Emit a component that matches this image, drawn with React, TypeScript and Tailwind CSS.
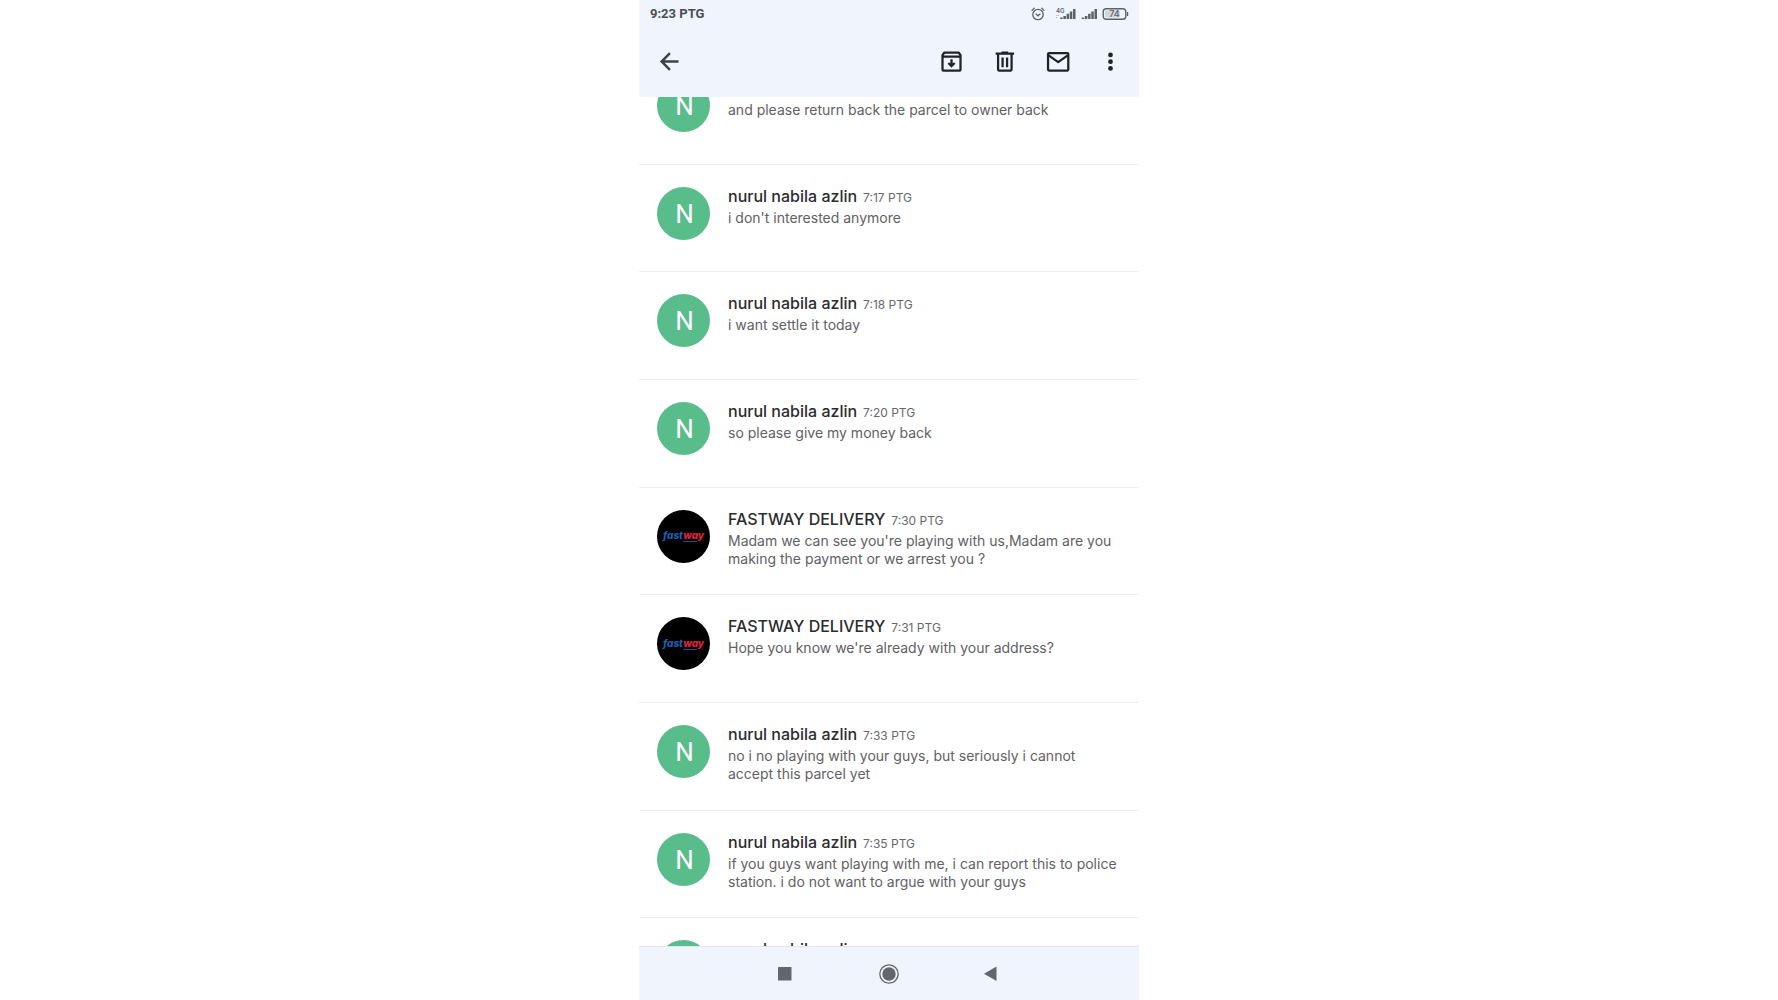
import React from 'react';

interface Message {
  id: number;
  sender: 'nurul nabila azlin' | 'FASTWAY DELIVERY';
  time: string;
  text: string;
}

const MESSAGES: Message[] = [
  { id: 1, sender: 'nurul nabila azlin', time: '7:17 PTG', text: 'and please return back the parcel to owner back' },
  { id: 2, sender: 'nurul nabila azlin', time: '7:17 PTG', text: "i don't interested anymore" },
  { id: 3, sender: 'nurul nabila azlin', time: '7:18 PTG', text: 'i want settle it today' },
  { id: 4, sender: 'nurul nabila azlin', time: '7:20 PTG', text: 'so please give my money back' },
  { id: 5, sender: 'FASTWAY DELIVERY', time: '7:30 PTG', text: "Madam we can see you're playing with us,Madam are you making the payment or we arrest you ?" },
  { id: 6, sender: 'FASTWAY DELIVERY', time: '7:31 PTG', text: "Hope you know we're already with your address?" },
  { id: 7, sender: 'nurul nabila azlin', time: '7:33 PTG', text: 'no i no playing with your guys, but seriously i cannot accept this parcel yet' },
  { id: 8, sender: 'nurul nabila azlin', time: '7:35 PTG', text: 'if you guys want playing with me, i can report this to police station. i do not want to argue with your guys' },
  { id: 9, sender: 'nurul nabila azlin', time: '7:21 PTG', text: '' },
];

export default function App() {
  return (
    <div className="h-screen bg-white font-['Inter','Liberation_Sans',sans-serif]">
      <div className="mx-auto flex h-full w-full max-w-[500px] flex-col">
        <header className="bg-[#f0f4fc]">
          <StatusBar />
          <Toolbar />
        </header>

        <main className="min-h-0 flex-1 overflow-hidden">
          {/* list is scrolled part way through the first message */}
          <ul className="-mt-10 grid h-[969px] auto-rows-fr">
            {MESSAGES.map((m) => (
              <MessageRow key={m.id} message={m} />
            ))}
          </ul>
        </main>

        <NavBar />
      </div>
    </div>
  );
}

function StatusBar() {
  return (
    <div className="flex h-[27px] items-center justify-between pr-[10px] pl-[11px]">
      <span className="font-['Roboto',sans-serif] text-[13px] font-bold text-[#4a4d55]">9:23 PTG</span>
      <div className="flex items-center text-[#5c6068]">
        <svg className="mr-[10px] size-[14px]" viewBox="0 0 14 14" fill="none" stroke="currentColor" strokeWidth="1.3" strokeLinecap="round">
          <circle cx="7" cy="7.5" r="5.2" />
          <path d="M1 3.4 3.2 1.2M13 3.4 10.8 1.2M5 7.1 7 8.8 9 7.100" />
        </svg>
        <svg className="mr-[5px] h-[14px] w-[21px]" viewBox="0 0 21 14" fill="currentColor">
          <text x="1" y="5.5" fontSize="6" fontWeight="600">4G</text>
          <path d="M1 8h1.5v1H1zM3 8h1v1H3zM1 10h1.5v1H1z" opacity=".4" />
          <path d="M5.2 10.500h2.500V12H5.200zM8.400 9h2.500v3H8.400zM11.600 6.700h2.500V12h-2.500zM14.800 4.500h2.500V12h-2.500zM18 2h2.500v10H18z" />
        </svg>
        <svg className="mr-1 h-[14px] w-[17px]" viewBox="0 0 17 14" fill="currentColor">
          <path d="M.7 10.500h2.500V12H.7zM3.900 9h2.500v3H3.900zM7.100 6.700h2.500V12H7.100zM10.300 4.500h2.500V12h-2.500zM13.500 2H16v10h-2.500z" />
        </svg>
        <svg className="h-[14px] w-[27px]" viewBox="0 0 27 14">
          <rect x="1.2" y="1.7" width="22.6" height="10.6" rx="3" fill="none" stroke="currentColor" strokeWidth="1.4" />
          <rect x="3" y="3.5" width="15" height="7" rx="1" fill="currentColor" opacity=".2" />
          <path d="M25 5h1.2v4H25z" fill="currentColor" />
          <text x="12.5" y="10.2" fontSize="9" fontWeight="500" textAnchor="middle" fill="currentColor">74</text>
        </svg>
      </div>
    </div>
  );
}

function Toolbar() {
  return (
    <div className="flex h-[70px] items-center justify-between pr-[15px] pb-0.5 pl-[17px] text-[#1f2228]">
      <button aria-label="Back" className="size-[27px] text-[#3f4248]">
        <svg viewBox="0 0 24 24" fill="none" stroke="currentColor" strokeWidth="2.2">
          <path d="M20 12H5.2M12.4 4.6 5 12l7.4 7.4" />
        </svg>
      </button>
      <div className="flex gap-[26px]">
        <button aria-label="Archive" className="size-[27px]">
          <svg viewBox="0 0 24 24" fill="none" stroke="currentColor" strokeWidth="2" strokeLinejoin="round">
            <path d="M4 7v12.300c0 .5.3.8.8.8h14.400c.5 0 .8-.3.8-.8V6.400L18.300 4H5.700L4 6.400V7.600h16" />
            <path d="M12 10v6M9.200 13.400 12 16.200l2.800-2.800" strokeLinejoin="miter" />
          </svg>
        </button>
        <button aria-label="Delete" className="size-[27px]">
          <svg viewBox="0 0 24 24" fill="none" stroke="currentColor" strokeWidth="2">
            <path d="M4.100 5h16.400M9.300 4h6M6.300 5v14.200c0 .5.3.8.8.8h10.400c.5 0 .8-.3.8-.8V5M10.300 8.500v8.500M14.300 8.500v8.500" />
          </svg>
        </button>
        <button aria-label="Mark as unread" className="size-[27px]">
          <svg viewBox="0 0 24 24" fill="none" stroke="currentColor" strokeWidth="2" strokeLinejoin="round">
            <rect x="3.600" y="4.500" width="18" height="15.500" rx=".8" />
            <path d="m4.100 6.500 8.500 6 8.500-6" />
          </svg>
        </button>
        <button aria-label="More options" className="size-[27px]">
          <svg viewBox="0 0 24 24" fill="currentColor">
            <circle cx="12" cy="6.200" r="2.100" />
            <circle cx="12" cy="12.200" r="2.100" />
            <circle cx="12" cy="18.200" r="2.100" />
          </svg>
        </button>
      </div>
    </div>
  );
}

function MessageRow({ message }: { message: Message }) {
  return (
    <li className="flex gap-[18px] border-b border-[#eeeff1] pt-[22px] pr-[17px] pl-[18px]">
      <Avatar sender={message.sender} />
      <div className="min-w-0 flex-1">
        <div className="flex items-baseline gap-[6px] leading-[18px]">
          <span className="text-[16px] font-medium text-[#2b2c2f]">{message.sender}</span>
          <span className="text-[12px] text-[#66686c]">{message.time}</span>
        </div>
        <p className="mt-0.5 text-[14px] leading-[18px] text-[#5f6165]">{message.text}</p>
      </div>
    </li>
  );
}

function Avatar({ sender }: { sender: Message['sender'] }) {
  if (sender === 'FASTWAY DELIVERY') {
    return (
      <div className="flex size-[53px] shrink-0 flex-col items-center justify-center rounded-full bg-black">
        <span className="text-[10px] leading-[11px] font-extrabold text-[#1c5fae] italic">
          fast<span className="text-[#e5203f]">way</span>
        </span>
        <span className="ml-3 h-px w-[14px] bg-[#1b4f8c]" />
      </div>
    );
  }
  return (
    <div className="flex size-[53px] shrink-0 items-center justify-center rounded-full bg-[#58bc8b] pt-0.5 pl-0.5 font-['Roboto',sans-serif] text-[26px] text-white">
      N
    </div>
  );
}

function NavBar() {
  return (
    <nav className="flex h-[54px] items-center justify-center gap-[83px] border-t border-[#e3e6ec] bg-[#f0f4fc] text-[#63666d]">
      <button aria-label="Recent apps" className="size-5">
        <svg viewBox="0 0 20 20" fill="currentColor">
          <rect x="2" y="3" width="13.500" height="13.500" rx=".6" />
        </svg>
      </button>
      <button aria-label="Home" className="size-5">
        <svg viewBox="0 0 20 20">
          <circle cx="10" cy="10" r="9.200" fill="none" stroke="currentColor" strokeWidth="1.300" />
          <circle cx="10" cy="10" r="6.700" fill="currentColor" />
        </svg>
      </button>
      <button aria-label="Back" className="size-5">
        <svg viewBox="0 0 20 20" fill="currentColor">
          <path d="M14.500 2.500v14.500L2 9.700z" />
        </svg>
      </button>
    </nav>
  );
}
